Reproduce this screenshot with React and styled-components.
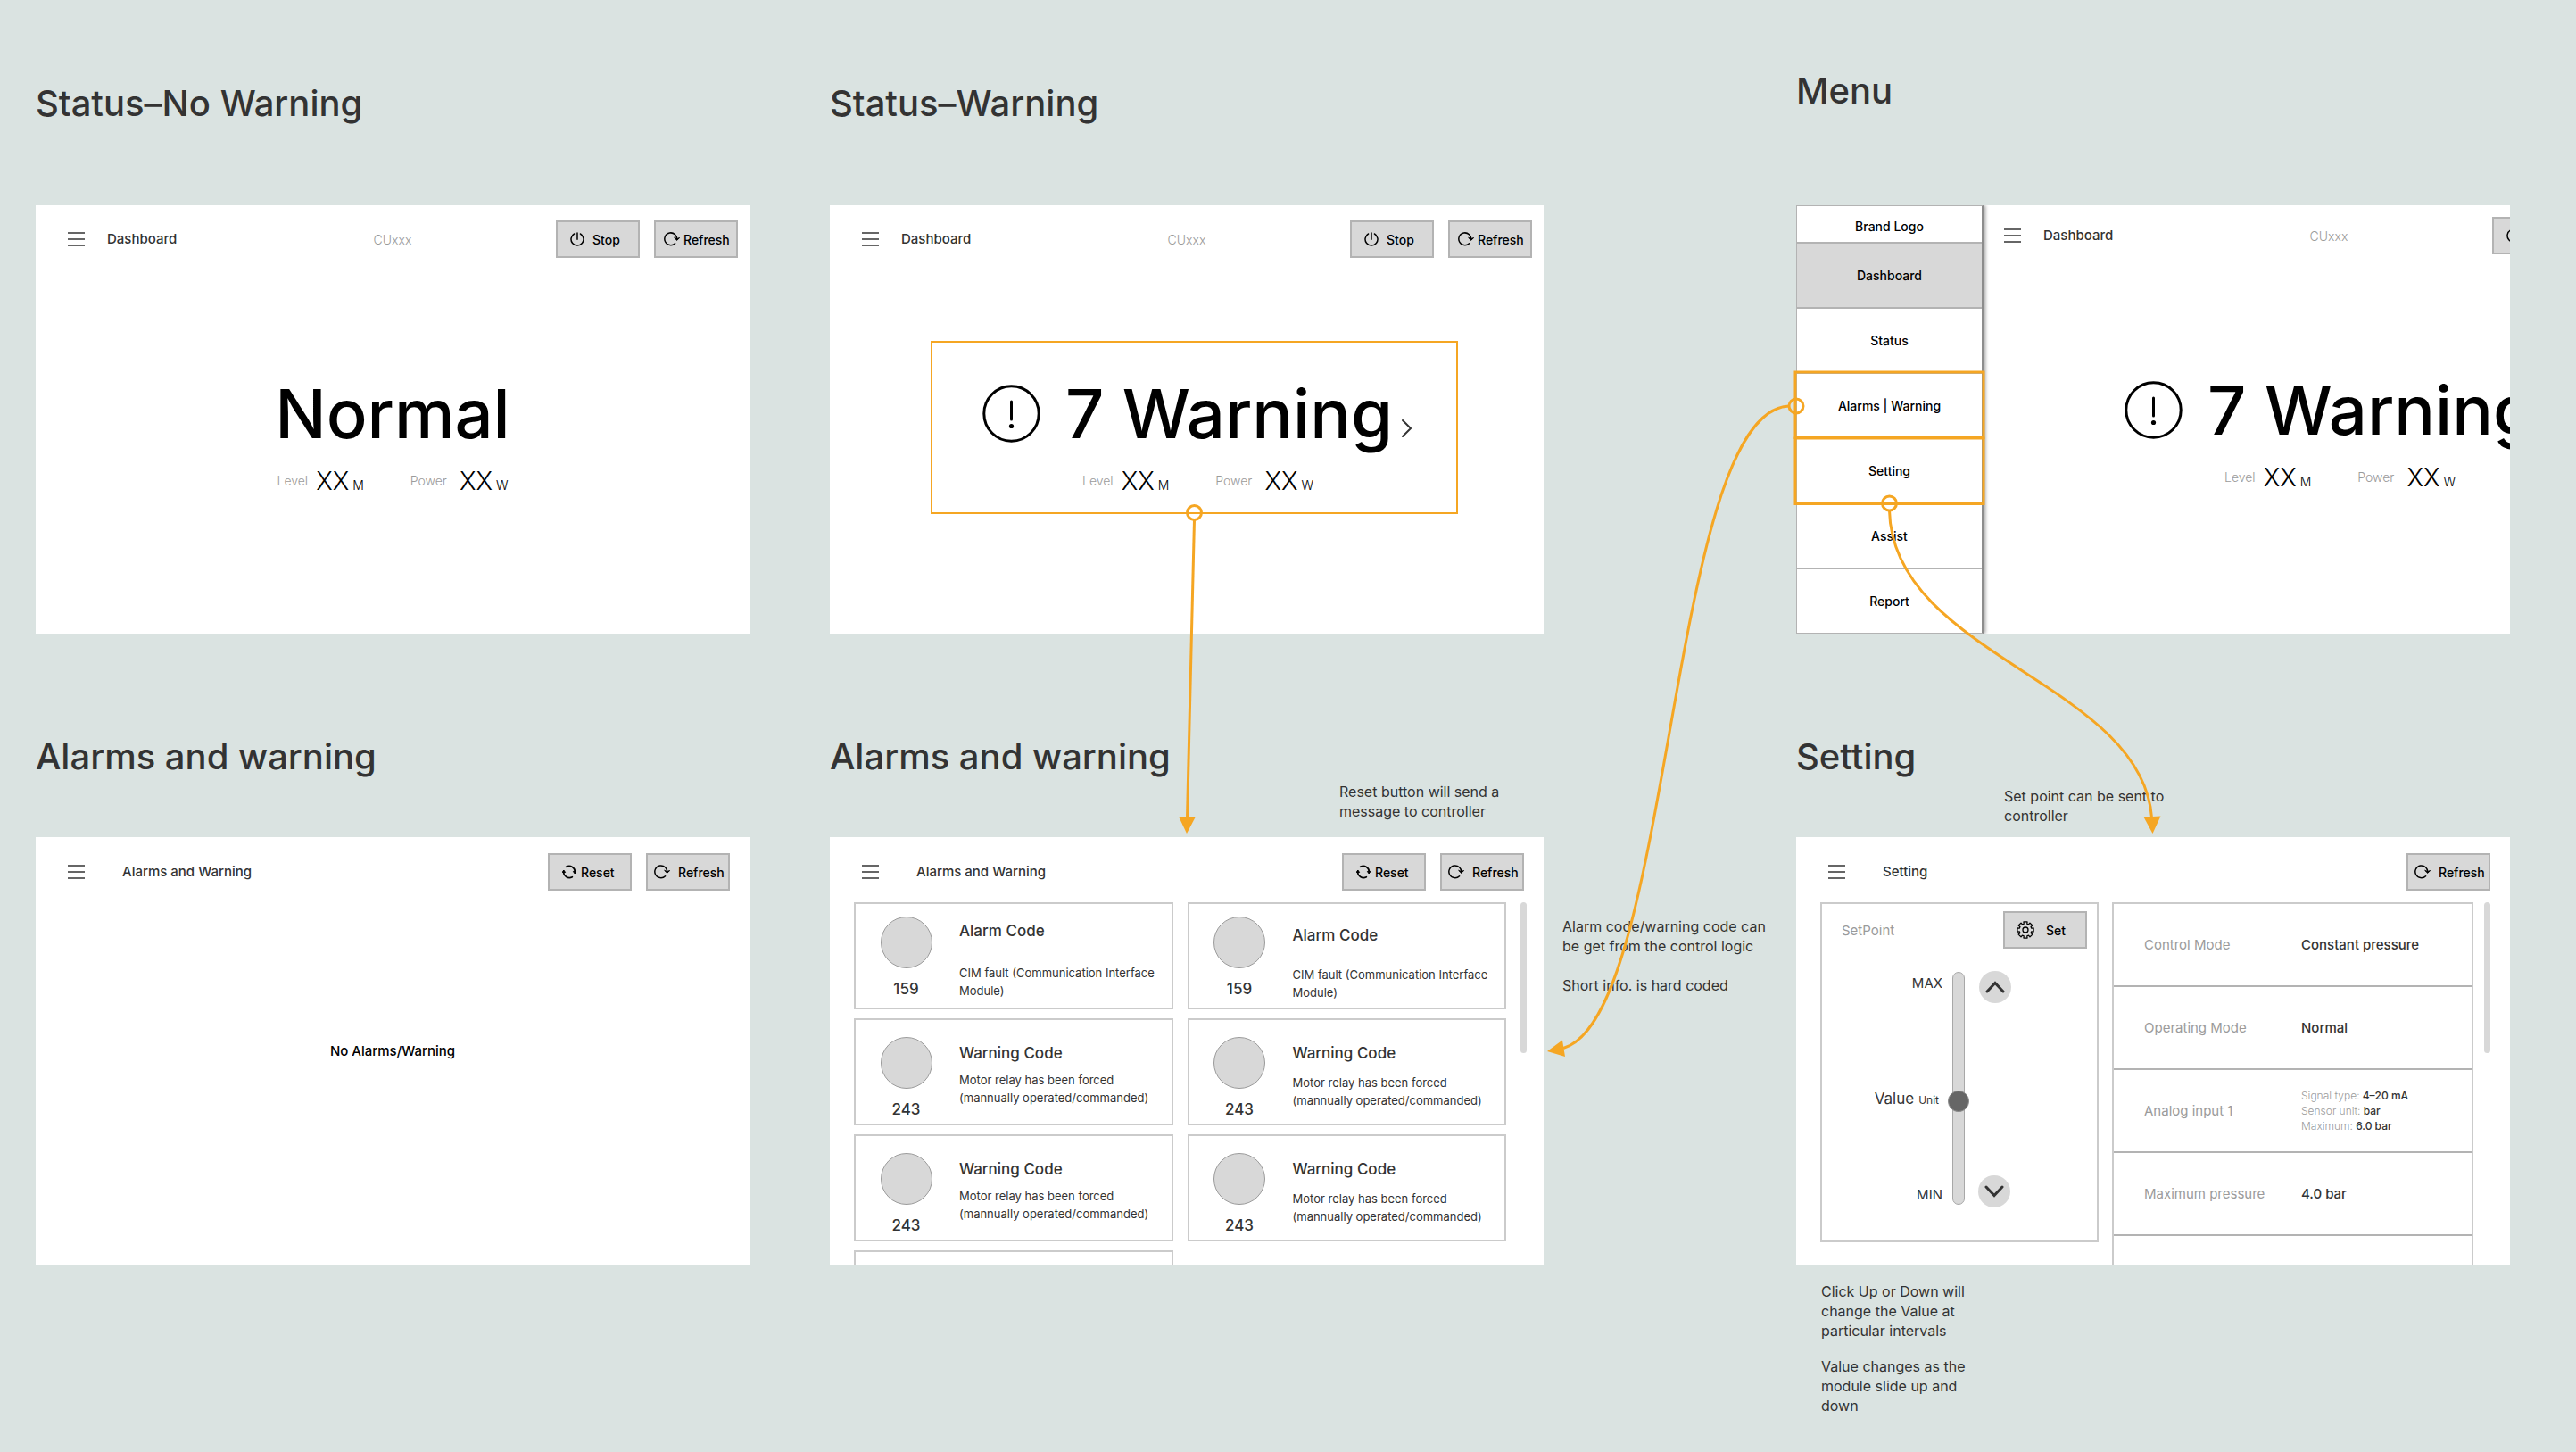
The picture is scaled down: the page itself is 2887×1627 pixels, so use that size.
import React, { useState } from 'react';
import styled, { createGlobalStyle, css } from 'styled-components';

const color = {
  canvas: '#dae3e1',
  ink: '#333333',
  muted: '#9b9b9b',
  fill: '#d8d8d8',
  line: '#cbcbcb',
  rule: '#b3b3b3',
  accent: '#f5a623',
};

const GlobalStyle = createGlobalStyle`
  *, *::before, *::after { box-sizing: border-box; }
  body {
    margin: 0;
    background: ${color.canvas};
    color: ${color.ink};
    font-family: Inter, "Liberation Sans", sans-serif;
  }
  h2, h3, h4, p, dl, dd { margin: 0; font-weight: inherit; }
  button { font: inherit; color: inherit; padding: 0; cursor: pointer; }
`;

/* ---------- Board ---------- */

const Board = styled.main`
  position: relative;
  min-height: 100vh;
  padding: 0 74px 0 40px;
  display: grid;
  grid-template-columns: minmax(0, 1fr) 90px minmax(0, 1fr) 283px minmax(0, 1fr);
  grid-template-rows: auto 1fr;
  align-items: start;
`;

const Frame = styled.section`
  grid-column: ${(p) => p.$col};
  grid-row: ${(p) => p.$row};
`;

const FrameHeader = styled.header`
  display: flex;
  justify-content: space-between;
  height: ${(p) => (p.$row === 1 ? 230 : 228)}px;
  padding-top: ${(p) => p.$top}px;
`;

const FrameTitle = styled.h2`
  font-size: 40px;
  line-height: 48px;
  font-weight: 500;
  white-space: nowrap;
`;

const Note = styled.p`
  font-size: 16px;
  line-height: 22px;
  white-space: pre-line;
`;

const HeaderNote = styled(Note)`
  align-self: flex-end;
  width: ${(p) => p.$width}px;
  margin-bottom: ${(p) => p.$lift}px;
`;

const SideNotes = styled.aside`
  grid-column: 4;
  grid-row: 2;
  display: grid;
  gap: 22px;
  padding: 317px 0 0 21px;
  white-space: nowrap;
`;

const FootNotes = styled.footer`
  display: grid;
  gap: 18px;
  padding: 18px 0 0 28px;
`;

const Screen = styled.div`
  height: 480px;
  overflow: hidden;
  background: #fff;
  display: ${(p) => (p.$split ? 'flex' : 'block')};
`;

/* ---------- Top bar ---------- */

const TopBar = styled.div`
  display: grid;
  grid-template-columns: 1fr auto 1fr;
  align-items: center;
  height: 73px;
  padding: ${(p) => p.$top}px 0 ${(p) => 31 - p.$top}px;
`;

const BarLeft = styled.div`
  display: flex;
  align-items: center;
  gap: ${(p) => p.$gap}px;
  padding-left: 36px;
`;

const BarRight = styled.div`
  display: flex;
  justify-content: flex-end;
  gap: 16px;
  padding-right: ${(p) => p.$inset}px;
`;

const MenuToggle = styled.button`
  display: flex;
  flex-direction: column;
  justify-content: space-between;
  width: 19px;
  height: 16px;
  border: 0;
  background: none;
`;

const MenuLine = styled.span`
  height: 2px;
  background: #666;
`;

const ScreenTitle = styled.h3`
  font-size: 15px;
  line-height: 20px;
  font-weight: 500;
  white-space: nowrap;
`;

const UnitName = styled.span`
  font-size: 14px;
  font-weight: 300;
  color: ${color.muted};
`;

const ActionButton = styled.button`
  display: flex;
  align-items: center;
  gap: ${(p) => p.$gap}px;
  width: 94px;
  height: 42px;
  padding-left: ${(p) => p.$pad}px;
  border: 2px solid ${color.rule};
  background: ${color.fill};
  color: #000;
  font-size: 14px;
  font-weight: 500;
`;

/* ---------- Icons ---------- */

const Svg = styled.svg`
  display: block;
  flex: none;
  fill: none;
  stroke: currentColor;
  stroke-width: ${(p) => p.$stroke || 1.5};
  stroke-linecap: round;
`;

const PowerIcon = () => (
  <Svg width="16" height="16" viewBox="0 0 16 16" aria-hidden="true">
    <path d="M8 .9v7.4" />
    <path d="M4.6 2A7 7 0 1 0 11.400 2" />
  </Svg>
);

const RefreshIcon = () => (
  <Svg width="18" height="16" viewBox="0 0 18 16" aria-hidden="true">
    <path d="M12.6 12.7A6.9 6.9 0 1 1 14.6 8.6" />
    <path d="M11.9 6.6l2.8 2.7 2.9-2.7-2.9.9z" fill="currentColor" strokeWidth="1" />
  </Svg>
);

const ResetIcon = () => (
  <Svg width="16" height="16" viewBox="0 0 16 16" $stroke={1.6} aria-hidden="true">
    <path d="M4.6 2.3A6.6 6.6 0 0 1 14.4 8.6" />
    <path d="M11.4 13.7A6.6 6.6 0 0 1 1.6 7.4" />
    <path d="M12.6 7.8l1.6 2.2 1.4-2.2zM.4 8.2L1.8 6l1.6 2.2z" fill="currentColor" strokeWidth="1" />
  </Svg>
);

const toothPath = () => {
  const teeth = 8;
  const points = [];
  for (let i = 0; i < teeth; i += 1) {
    const mid = (i * 2 * Math.PI) / teeth - Math.PI / 2;
    [[-0.26, 7], [-0.22, 9.3], [0.22, 9.3], [0.26, 7]].forEach(([turn, radius]) => {
      points.push(
        `${(10 + radius * Math.cos(mid + turn)).toFixed(2)} ${(10 + radius * Math.sin(mid + turn)).toFixed(2)}`
      );
    });
  }
  return `M${points.join('L')}Z`;
};

const GearIcon = () => (
  <Svg width="20" height="20" viewBox="0 0 20 20" $stroke={1.3} strokeLinejoin="round" aria-hidden="true">
    <path d={toothPath()} />
    <circle cx="10" cy="10" r="3" />
  </Svg>
);

const AlertIcon = () => (
  <Svg width="65" height="65" viewBox="0 0 65 65" $stroke={3} aria-hidden="true">
    <circle cx="32.5" cy="32.5" r="30.7" />
    <path d="M32.5 19v20" />
    <circle cx="32.5" cy="46.5" r="2.6" fill="currentColor" stroke="none" />
  </Svg>
);

const ChevronRight = styled(Svg)`
  margin-top: 34px;
  color: #333;
`;

/* ---------- Dashboard ---------- */

const Pane = styled.div`
  flex: 0 0 100%;
  ${(p) =>
    p.$shifted &&
    css`
      margin: -4px 0 0 -13px;
    `}
`;

const Summary = styled.div`
  display: flex;
  flex-direction: column;
  align-items: center;
  gap: 14px;
  padding-top: 116px;
  color: #000;
`;

const SummaryLink = styled.a`
  display: flex;
  flex-direction: column;
  align-items: center;
  gap: 14px;
  margin: 79px 96px 0 113px;
  padding: 35px 0 17px 8px;
  border: 2px solid ${(p) => (p.$framed ? color.accent : 'transparent')};
  color: #000;
  text-decoration: none;
`;

const Headline = styled.div`
  display: flex;
  align-items: center;
  font-size: 76px;
  line-height: 88px;
  font-weight: 500;
  white-space: nowrap;
`;

const HeadlineText = styled.span`
  margin: 0 9px 0 28px;
`;

const Readings = styled.div`
  display: flex;
  gap: 52px;
`;

const Reading = styled.div`
  display: flex;
  align-items: center;
  gap: ${(p) => p.$gap}px;
  line-height: 36px;
`;

const ReadingLabel = styled.span`
  font-size: 14px;
  font-weight: 300;
  color: ${color.muted};
`;

const ReadingValue = styled.span`
  display: flex;
  align-items: baseline;
  gap: 4px;
  font-size: 28px;
  font-weight: 300;
`;

const ReadingUnit = styled.small`
  font-size: 14px;
  line-height: 16px;
`;

/* ---------- Side menu ---------- */

const SideMenu = styled.nav`
  position: relative;
  z-index: 1;
  flex: 0 0 210px;
  display: flex;
  flex-direction: column;
  border: 1px solid ${color.rule};
  border-right: 2px solid #8c8c8c;
  background: #fff;
  box-shadow: 2px 0 4px rgba(0, 0, 0, 0.4);
  color: #000;
  font-size: 14px;
  font-weight: 500;
`;

const Brand = styled.div`
  height: 40px;
  padding-top: 5px;
  line-height: 36px;
  text-align: center;
`;

const MenuItem = styled.a`
  flex: 1;
  display: flex;
  align-items: center;
  justify-content: center;
  border-top: 2px solid ${color.rule};
  background: ${(p) => (p.$active ? color.fill : '#fff')};
  color: inherit;
  text-decoration: none;
`;

/* ---------- Alarm list ---------- */

const Empty = styled.p`
  padding-top: 157px;
  text-align: center;
  color: #000;
  font-size: 15px;
  line-height: 20px;
  font-weight: 500;
`;

const ListBody = styled.div`
  display: flex;
  align-items: flex-start;
  gap: ${(p) => p.$gap}px;
  padding: 0 ${(p) => p.$right}px 0 27px;
`;

const CardGrid = styled.div`
  flex: 1;
  display: grid;
  grid-template-columns: 1fr 1fr;
  gap: 10px 16px;
`;

const Card = styled.article`
  display: grid;
  grid-template-columns: 113px 1fr;
  height: 120px;
  border: 2px solid ${color.line};
`;

const Code = styled.div`
  display: flex;
  flex-direction: column;
  align-items: center;
  gap: 11px;
  padding-top: ${(p) => (p.$alarm ? 14 : 19)}px;
  font-size: 17px;
  line-height: 24px;
  font-weight: 500;
`;

const Lamp = styled.span`
  width: 58px;
  height: 58px;
  border: 1px solid ${color.muted};
  border-radius: 50%;
  background: ${color.fill};
`;

const CardText = styled.div`
  display: flex;
  flex-direction: column;
  gap: ${(p) => p.$gap}px;
  padding: ${(p) => p.$top}px 0 0 3px;
`;

const CardTitle = styled.h4`
  font-size: 17px;
  line-height: 24px;
  font-weight: 500;
`;

const CardInfo = styled.p`
  font-size: 13px;
  line-height: 20px;
  white-space: pre-line;
`;

const ScrollThumb = styled.div`
  flex: none;
  width: 7px;
  height: 169px;
  border-radius: 4px;
  background: ${color.fill};
`;

/* ---------- Settings ---------- */

const SetPanel = styled.div`
  flex: 0 0 312px;
  height: 381px;
  border: 2px solid ${color.line};
`;

const SetHead = styled.div`
  display: flex;
  align-items: center;
  justify-content: space-between;
  padding: 8px 11px 0 22px;
`;

const SetLabel = styled.label`
  font-size: 15px;
  color: ${color.muted};
`;

const SetControl = styled.div`
  display: grid;
  grid-template-columns: 135px 24px 41px;
  column-gap: 6px;
  height: 265px;
  margin-top: 25px;
`;

const Scale = styled.div`
  display: flex;
  flex-direction: column;
  align-items: flex-end;
  padding: 2px 0;
  font-size: 15px;
  line-height: 24px;
`;

const Spacer = styled.span`
  flex: ${(p) => p.$grow} 0 0;
`;

const Current = styled.output`
  display: flex;
  align-items: baseline;
  gap: 5px;
  padding-right: 4px;
  font-size: 17px;
`;

const CurrentUnit = styled.small`
  font-size: 12px;
`;

const Slider = styled.input`
  appearance: none;
  writing-mode: vertical-lr;
  direction: rtl;
  width: 24px;
  height: 261px;
  margin: 1px 0;
  background: none;

  &::-webkit-slider-runnable-track {
    width: 14px;
    height: 261px;
    border: 1px solid #a8a8a8;
    border-radius: 7px;
    background: ${color.fill};
  }

  &::-webkit-slider-thumb {
    appearance: none;
    width: 24px;
    height: 24px;
    margin-left: -6px;
    border: 1px solid #8c8c8c;
    border-radius: 50%;
    background: #666;
  }
`;

const Steps = styled.div`
  display: flex;
  flex-direction: column;
  justify-content: space-between;
  margin-left: 4px;
`;

const StepButton = styled.button`
  display: grid;
  place-items: center;
  align-self: ${(p) => (p.$up ? 'flex-end' : 'flex-start')};
  width: 36px;
  height: 36px;
  border: 0;
  border-radius: 50%;
  background: ${color.fill};
`;

const SettingColumn = styled.div`
  flex: 1;
  display: flex;
  align-items: flex-start;
  gap: 12px;
`;

const Settings = styled.dl`
  flex: 1;
  border: 2px solid ${color.line};
  border-top: 0;
`;

const SettingRow = styled.div`
  display: grid;
  grid-template-columns: 176px 1fr;
  align-items: center;
  height: 93px;
  padding-left: 34px;
  border-top: 2px solid ${(p) => (p.$first ? color.line : color.rule)};
  font-size: 15px;
`;

const SettingName = styled.dt`
  color: ${color.muted};
`;

const SettingValue = styled.dd`
  font-weight: 500;
`;

const Detail = styled.p`
  font-size: 12px;
  line-height: 17px;
`;

const DetailName = styled.span`
  color: ${color.muted};
  font-weight: 300;
`;

/* ---------- Connectors ---------- */

const Connectors = styled.svg`
  position: absolute;
  inset: 0;
  width: 100%;
  height: 100%;
  z-index: 2;
  fill: none;
  stroke: ${color.accent};
  stroke-width: 3;
  pointer-events: none;
`;

const ArrowHead = styled.path`
  fill: ${color.accent};
  stroke: none;
`;

const FlowLines = () => (
  <Connectors viewBox="0 0 2887 1627" preserveAspectRatio="none" aria-hidden="true">
    <circle cx="1338.5" cy="574.5" r="8" />
    <path d="M1338.5 582.5L1330.5 916" />
    <ArrowHead d="M1321 915h19l-10 19z" />

    <rect x="2012" y="417" width="211" height="73.5" />
    <rect x="2012" y="491" width="211" height="73.5" />

    <circle cx="2013" cy="455" r="8" />
    <path d="M2005 455C1870 460 1875 1140 1752 1174.5" />
    <ArrowHead d="M1734 1178l17-12.5 3 18.5z" />

    <circle cx="2117.5" cy="564" r="8" />
    <path d="M2117.5 572C2121 735 2400 765 2411.5 916" />
    <ArrowHead d="M2402.5 915.5l19-1-9 19.5z" />
  </Connectors>
);

/* ---------- Composed parts ---------- */

const Bar = ({ title, name, wide, top, inset, children }) => (
  <TopBar $top={top}>
    <BarLeft $gap={wide ? 42 : 25}>
      <MenuToggle type="button" aria-label="Open menu">
        <MenuLine />
        <MenuLine />
        <MenuLine />
      </MenuToggle>
      <ScreenTitle>{title}</ScreenTitle>
    </BarLeft>
    <UnitName>{name}</UnitName>
    <BarRight $inset={inset}>{children}</BarRight>
  </TopBar>
);

const DashboardBar = () => (
  <Bar title="Dashboard" name="CUxxx" top={17} inset={13}>
    <ActionButton type="button" $pad={14} $gap={9}>
      <PowerIcon />
      Stop
    </ActionButton>
    <ActionButton type="button" $pad={9} $gap={4}>
      <RefreshIcon />
      Refresh
    </ActionButton>
  </Bar>
);

const RefreshAction = () => (
  <ActionButton type="button" $pad={7} $gap={9}>
    <RefreshIcon />
    Refresh
  </ActionButton>
);

const AlarmBar = () => (
  <Bar title="Alarms and Warning" wide top={18} inset={22}>
    <ActionButton type="button" $pad={14} $gap={5}>
      <ResetIcon />
      Reset
    </ActionButton>
    <RefreshAction />
  </Bar>
);

const ReadingRow = () => (
  <Readings>
    <Reading $gap={9}>
      <ReadingLabel>Level</ReadingLabel>
      <ReadingValue>
        XX<ReadingUnit>M</ReadingUnit>
      </ReadingValue>
    </Reading>
    <Reading $gap={14}>
      <ReadingLabel>Power</ReadingLabel>
      <ReadingValue>
        XX<ReadingUnit>W</ReadingUnit>
      </ReadingValue>
    </Reading>
  </Readings>
);

const WarningSummary = ({ framed }) => (
  <SummaryLink href="#alarms" $framed={framed}>
    <Headline>
      <AlertIcon />
      <HeadlineText>7 Warning</HeadlineText>
      <ChevronRight width="14" height="22" viewBox="0 0 14 22" $stroke={2} aria-hidden="true">
        <path d="M2 2l9 9-9 9" />
      </ChevronRight>
    </Headline>
    <ReadingRow />
  </SummaryLink>
);

const menuItems = ['Dashboard', 'Status', 'Alarms | Warning', 'Setting', 'Assist', 'Report'];

const alarmInfo = 'CIM fault (Communication Interface\nModule)';
const warningInfo = 'Motor relay has been forced\n(mannually operated/commanded)';
const cards = [
  { code: 159, title: 'Alarm Code', info: alarmInfo, top: 18, gap: 25 },
  { code: 159, title: 'Alarm Code', info: alarmInfo, top: 23, gap: 22 },
  { code: 243, title: 'Warning Code', info: warningInfo, top: 25, gap: 8 },
  { code: 243, title: 'Warning Code', info: warningInfo, top: 25, gap: 11 },
  { code: 243, title: 'Warning Code', info: warningInfo, top: 25, gap: 8 },
  { code: 243, title: 'Warning Code', info: warningInfo, top: 25, gap: 11 },
];

const AlarmList = () => (
  <ListBody $gap={16} $right={19}>
    <CardGrid>
      {cards.map((card, i) => (
        <Card key={i}>
          <Code $alarm={card.code === 159}>
            <Lamp />
            {card.code}
          </Code>
          <CardText $top={card.top} $gap={card.gap}>
            <CardTitle>{card.title}</CardTitle>
            <CardInfo>{card.info}</CardInfo>
          </CardText>
        </Card>
      ))}
      <Card />
    </CardGrid>
    <ScrollThumb />
  </ListBody>
);

const signal = [
  ['Signal type:', '4–20 mA'],
  ['Sensor unit:', 'bar'],
  ['Maximum:', '6.0 bar'],
];

const SettingBody = () => {
  const [value, setValue] = useState(44);
  const step = (by) => setValue((v) => Math.min(100, Math.max(0, v + by)));
  return (
    <ListBody $gap={15} $right={22}>
      <SetPanel>
        <SetHead>
          <SetLabel htmlFor="setpoint">SetPoint</SetLabel>
          <ActionButton type="button" $pad={13} $gap={13}>
            <GearIcon />
            Set
          </ActionButton>
        </SetHead>
        <SetControl>
          <Scale>
            <span>MAX</span>
            <Spacer $grow={100 - value} />
            <Current htmlFor="setpoint">
              Value<CurrentUnit>Unit</CurrentUnit>
            </Current>
            <Spacer $grow={value} />
            <span>MIN</span>
          </Scale>
          <Slider
            id="setpoint"
            type="range"
            min="0"
            max="100"
            value={value}
            onChange={(e) => setValue(Number(e.target.value))}
          />
          <Steps>
            <StepButton type="button" $up aria-label="Up" onClick={() => step(5)}>
              <Svg width="22" height="14" viewBox="0 0 22 14" $stroke={3} aria-hidden="true">
                <path d="M2 12l9-9.5 9 9.5" />
              </Svg>
            </StepButton>
            <StepButton type="button" aria-label="Down" onClick={() => step(-5)}>
              <Svg width="22" height="14" viewBox="0 0 22 14" $stroke={3} aria-hidden="true">
                <path d="M2 2l9 9.5 9-9.5" />
              </Svg>
            </StepButton>
          </Steps>
        </SetControl>
      </SetPanel>
      <SettingColumn>
        <Settings>
          <SettingRow $first>
            <SettingName>Control Mode</SettingName>
            <SettingValue>Constant pressure</SettingValue>
          </SettingRow>
          <SettingRow>
            <SettingName>Operating Mode</SettingName>
            <SettingValue>Normal</SettingValue>
          </SettingRow>
          <SettingRow>
            <SettingName>Analog input 1</SettingName>
            <SettingValue>
              {signal.map(([name, text]) => (
                <Detail key={name}>
                  <DetailName>{name}</DetailName> {text}
                </Detail>
              ))}
            </SettingValue>
          </SettingRow>
          <SettingRow>
            <SettingName>Maximum pressure</SettingName>
            <SettingValue>4.0 bar</SettingValue>
          </SettingRow>
          <SettingRow />
        </Settings>
        <ScrollThumb />
      </SettingColumn>
    </ListBody>
  );
};

const Head = ({ row, top, title, children }) => (
  <FrameHeader $row={row} $top={top}>
    <FrameTitle>{title}</FrameTitle>
    {children}
  </FrameHeader>
);

export default function App() {
  return (
    <>
      <GlobalStyle />
      <Board>
        <Frame $col={1} $row={1}>
          <Head row={1} top={92} title="Status–No Warning" />
          <Screen>
            <DashboardBar />
            <Summary>
              <Headline>Normal</Headline>
              <ReadingRow />
            </Summary>
          </Screen>
        </Frame>

        <Frame $col={3} $row={1}>
          <Head row={1} top={92} title="Status–Warning" />
          <Screen>
            <DashboardBar />
            <WarningSummary framed />
          </Screen>
        </Frame>

        <Frame $col={5} $row={1}>
          <Head row={1} top={78} title="Menu" />
          <Screen $split>
            <SideMenu aria-label="Main">
              <Brand>Brand Logo</Brand>
              {menuItems.map((item, i) => (
                <MenuItem key={item} href={`#item-${i}`} $active={i === 0}>
                  {item}
                </MenuItem>
              ))}
            </SideMenu>
            <Pane $shifted>
              <DashboardBar />
              <WarningSummary />
            </Pane>
          </Screen>
        </Frame>

        <Frame $col={1} $row={2}>
          <Head row={2} top={114} title="Alarms and warning" />
          <Screen>
            <AlarmBar />
            <Empty>No Alarms/Warning</Empty>
          </Screen>
        </Frame>

        <Frame $col={3} $row={2}>
          <Head row={2} top={114} title="Alarms and warning">
            <HeaderNote $width={229} $lift={18}>
              {'Reset button will send a\nmessage to controller'}
            </HeaderNote>
          </Head>
          <Screen>
            <AlarmBar />
            <AlarmList />
          </Screen>
        </Frame>

        <SideNotes>
          <Note>{'Alarm code/warning code can\nbe get from the control logic'}</Note>
          <Note>Short info. is hard coded</Note>
        </SideNotes>

        <Frame $col={5} $row={2}>
          <Head row={2} top={114} title="Setting">
            <HeaderNote $width={567} $lift={13}>
              {'Set point can be sent to\ncontroller'}
            </HeaderNote>
          </Head>
          <Screen>
            <Bar title="Setting" wide top={18} inset={22}>
              <RefreshAction />
            </Bar>
            <SettingBody />
          </Screen>
          <FootNotes>
            <Note>{'Click Up or Down will\nchange the Value at\nparticular intervals'}</Note>
            <Note>{'Value changes as the\nmodule slide up and\ndown'}</Note>
          </FootNotes>
        </Frame>

        <FlowLines />
      </Board>
    </>
  );
}
